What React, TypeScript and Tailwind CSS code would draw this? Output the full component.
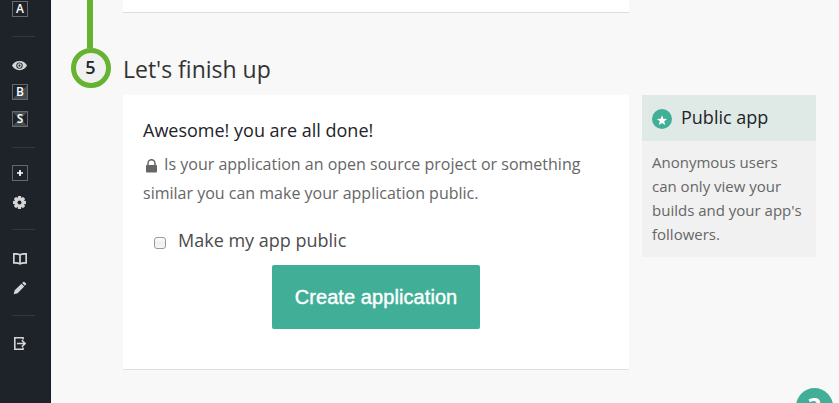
import type { ReactNode } from "react";

function Divider({ className }: { className: string }) {
  return <div className={`h-px w-[23px] shrink-0 bg-[#34393f] ${className}`} />;
}

function KeyBox({ children, className }: { children: ReactNode; className: string }) {
  return (
    <div
      className={`flex size-4 shrink-0 items-center justify-center border border-[#65696d] text-[12px] leading-none font-semibold text-white ${className}`}
    >
      {children}
    </div>
  );
}

function Sidebar() {
  return (
    <nav className="flex h-full w-[51px] shrink-0 flex-col border-r border-[#171b20] bg-[#1e2329] pt-px pl-3 text-[#d6d6d6]">
      <KeyBox className="bg-[#1e2329]">A</KeyBox>
      <Divider className="mt-[19px]" />
      <svg className="mt-6 h-[10px] w-[15px] shrink-0" viewBox="0 0 15 10">
        <path
          fill="currentColor"
          fillRule="evenodd"
          d="M7.500 0C11 0 13.800 2 15 4.600 13.800 7.200 11 9.200 7.500 9.200S1.200 7.200 0 4.600C1.200 2 4 0 7.500 0ZM7.500 1.400a3.200 3.200 0 1 0 0 6.400 3.200 3.200 0 0 0 0-6.400Z"
        />
        <path
          fill="currentColor"
          fillRule="evenodd"
          d="M7.500 2.300a2.300 2.300 0 1 0 0 4.600 2.300 2.300 0 0 0 0-4.600ZM7.500 3.500a1.100 1.100 0 1 1 0 2.200 1.100 1.100 0 0 1 0-2.200Z"
        />
      </svg>
      <KeyBox className="mt-[13px] bg-[conic-gradient(#1e2329_45deg,#454a4f_45deg_225deg,#1e2329_225deg)]">
        <span className="-mt-px">B</span>
      </KeyBox>
      <KeyBox className="mt-[11px] bg-[conic-gradient(#454a4f_45deg,#1e2329_45deg_135deg,#454a4f_135deg_225deg,#1e2329_225deg_315deg,#454a4f_315deg)]">
        <span className="-mt-px">S</span>
      </KeyBox>
      <Divider className="mt-5" />
      <KeyBox className="mt-[17px]">
        <svg className="size-[6px]" viewBox="0 0 6 6">
          <path d="M2.15 0h1.7v2.15H6v1.7H3.85V6h-1.7V3.85H0v-1.7h2.15Z" fill="#fff" />
        </svg>
      </KeyBox>
      <svg className="mt-[15px] ml-px size-[13px] shrink-0" viewBox="0 0 13 13">
        <g fill="currentColor">
          <rect x="4.800" y="0" width="3.400" height="13" rx=".7" />
          <rect x="4.800" y="0" width="3.400" height="13" rx=".7" transform="rotate(45 6.5 6.5)" />
          <rect x="4.800" y="0" width="3.400" height="13" rx=".7" transform="rotate(90 6.5 6.5)" />
          <rect x="4.800" y="0" width="3.400" height="13" rx=".7" transform="rotate(135 6.5 6.5)" />
          <circle cx="6.5" cy="6.5" r="5" />
        </g>
        <circle cx="6.5" cy="6.5" r="2" fill="#1e2329" />
      </svg>
      <Divider className="mt-5" />
      <svg className="mt-[23px] ml-px h-3 w-[14px] shrink-0" viewBox="0 0 14 12" fill="none" stroke="currentColor">
        <path
          strokeWidth="1.700"
          d="M7 1.8C5.5.8 3.500.7.8.8v9c2.700-.1 4.700 0 6.200 1.100 1.500-1.100 3.500-1.200 6.200-1.100v-9C10.500.7 8.500.8 7 1.800Zm0 0v9"
        />
      </svg>
      <svg className="mt-4 ml-[1px] size-[14px] shrink-0" viewBox="0 0 14 14" fill="currentColor">
        <path d="m.7 13.200 1-3.900 6.700-6.600 2.800 2.800-6.600 6.700ZM9.100 2 10.300.9q.6-.5 1.200 0l1.500 1.500q.5.600 0 1.200L11.900 4.800Z" />
      </svg>
      <Divider className="mt-5" />
      <svg className="mt-[21px] ml-[2px] h-[13px] w-3 shrink-0" viewBox="0 0 12 13" fill="none" stroke="currentColor">
        <path d="M9 2.500V.8H.8v11.400H9v-1.700" strokeWidth="1.600" />
        <path d="M3 6.500h8M7.800 3.300 11 6.500 7.800 9.700" strokeWidth="1.600" />
      </svg>
    </nav>
  );
}

function Step() {
  return (
    <div className="ml-5 flex w-10 shrink-0 flex-col items-center">
      <div className="h-12 w-[6px] -translate-x-px bg-[#65b32e]" />
      <div className="flex size-10 items-center justify-center rounded-full border-[5px] border-[#65b32e] bg-[#f1f1f1] pr-px pb-0.5 text-[18px] leading-none font-semibold text-[#22272c]">
        5
      </div>
    </div>
  );
}

function FinishCard() {
  return (
    <section className="flex h-[275px] flex-col border-b border-[#dedede] bg-white px-5 pt-[23px]">
      <h3 className="text-[18px] leading-6 text-[#1e2329]">Awesome! you are all done!</h3>
      <p className="mt-2 text-[16px] leading-[29px] whitespace-nowrap text-[#666]">
        <svg className="mr-[7px] ml-[3px] inline-block h-[14px] w-[11px] align-[-3px]" viewBox="0 0 11 14">
          <path d="M2 6V4.200a3.500 3.500 0 0 1 7 0V6" fill="none" stroke="#666" strokeWidth="1.500" />
          <rect y="6" width="11" height="7.500" rx=".8" fill="#666" />
        </svg>
        Is your application an open source project or something
        <br />
        similar you can make your application public.
      </p>
      <label className="mt-5 flex h-6 items-center pl-[11px] text-[18px] leading-6 text-[#4c4c4c]">
        <input
          type="checkbox"
          className="mt-[6px] mr-3 size-3 appearance-none rounded-[3px] border border-[#999] bg-linear-to-b from-white via-[#eee] to-[#f8f8f8]"
        />
        <span>Make my app public</span>
      </label>
      <button className="mt-[13px] ml-[129px] h-16 w-[208px] shrink-0 rounded-[2px] bg-[#41af98] font-['Liberation_Sans',sans-serif] text-[20px] tracking-[0.08px] text-white [-webkit-text-stroke:0.4px_white]">
        Create application
      </button>
    </section>
  );
}

function PublicAside() {
  return (
    <aside className="mt-[95px] ml-[13px] h-[162px] w-[174px] shrink-0 bg-[#f1f1f1]">
      <header className="flex h-[46px] items-center bg-[#dfeae6] pl-[10px] text-[18px] text-[#1e2329]">
        <svg className="mt-[2px] mr-[10px] size-5" viewBox="0 0 20 20">
          <circle cx="10" cy="10" r="10" fill="#41af98" />
          <path
            fill="#fff"
            d="m10 6.300 1.350 3.500 3.800.2-2.950 2.350 1 3.650L10 13.950 6.800 16l1-3.650L4.850 10l3.800-.2Z"
          />
        </svg>
        <span className="-mt-px -ml-px">Public app</span>
      </header>
      <p className="pt-[9px] pl-[10px] text-[15px] leading-6 whitespace-nowrap text-[#666]">
        Anonymous users
        <br />
        can only view your
        <br />
        builds and your app's
        <br />
        followers.
      </p>
    </aside>
  );
}

export default function App() {
  return (
    <div className="relative flex h-[403px] w-[839px] overflow-hidden bg-[#f8f8f8] font-['Open_Sans',sans-serif]">
      <Sidebar />
      <Step />
      <main className="ml-3 w-[506px] shrink-0">
        <div className="h-[13px] border-b border-[#dedede] bg-white" />
        <h2 className="flex h-[82px] items-center pt-[30px] text-[23px] leading-none text-[#333]">Let's finish up</h2>
        <FinishCard />
      </main>
      <PublicAside />
      <button className="absolute top-[388px] left-[796px] size-[37px] rounded-full bg-[#41af98] text-[25px] leading-[33px] font-bold text-white">
        ?
      </button>
    </div>
  );
}
